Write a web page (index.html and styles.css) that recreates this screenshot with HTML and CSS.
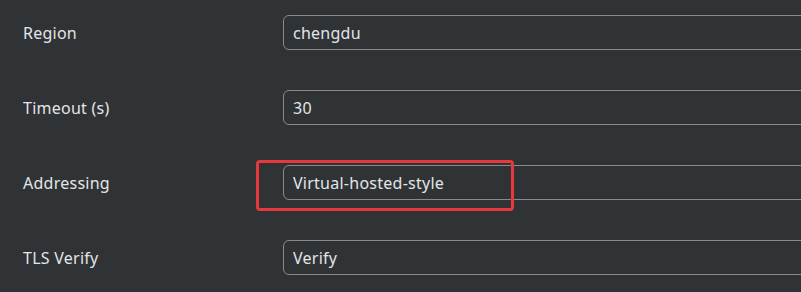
FILE: index.html
```html
<!DOCTYPE html>
<html lang="en">
<head>
    <meta charset="UTF-8">
    <meta name="viewport" content="width=device-width, initial-scale=1.0">
    <title>Storage settings</title>
    <link rel="stylesheet" href="styles.css">
</head>
<body>
    <div class="form">
        <div class="row">
            <label for="region">Region</label>
            <div class="field"><input type="text" id="region" value="chengdu"></div>
        </div>
        <div class="row">
            <label for="timeout">Timeout (s)</label>
            <div class="field"><input type="text" id="timeout" value="30"></div>
        </div>
        <div class="row">
            <label for="addressing">Addressing</label>
            <div class="field">
                <input type="text" id="addressing" value="Virtual-hosted-style">
                <div class="highlight"></div>
            </div>
        </div>
        <div class="row">
            <label for="tls">TLS Verify</label>
            <div class="field"><input type="text" id="tls" value="Verify"></div>
        </div>
    </div>
</body>
</html>
```

FILE: styles.css
```css
html, body {
    height: 100%;
}
body {
    margin: 0;
    background-color: #2f3336;
    font-family: "Noto Sans", "Open Sans", sans-serif;
    color: #e4e5e6;
    overflow: hidden;
}
.form {
    padding: 15px 0 0 23px;
    overflow: hidden;
}
.row {
    display: grid;
    grid-template-columns: 260px 1fr;
    align-items: center;
    height: 35px;
    margin-bottom: 40px;
}
.row:last-child {
    margin-bottom: 0;
}
label {
    font-size: 16px;
    letter-spacing: 0.25px;
}
.field {
    position: relative;
}
/* the inputs run on past the right edge of the window */
input {
    display: block;
    width: calc(100% + 10px);
    height: 35px;
    box-sizing: border-box;
    padding: 0 9px;
    border: 1px solid #888b8e;
    border-radius: 6px;
    background-color: #2f3336;
    color: #e4e5e6;
    font-family: inherit;
    font-size: 16px;
    letter-spacing: 0.25px;
    outline: none;
}
/* red annotation box */
.highlight {
    position: absolute;
    left: -27px;
    top: -5px;
    width: 258px;
    height: 51px;
    box-sizing: border-box;
    border: 3px solid #e8383c;
    border-radius: 4px;
}
```
